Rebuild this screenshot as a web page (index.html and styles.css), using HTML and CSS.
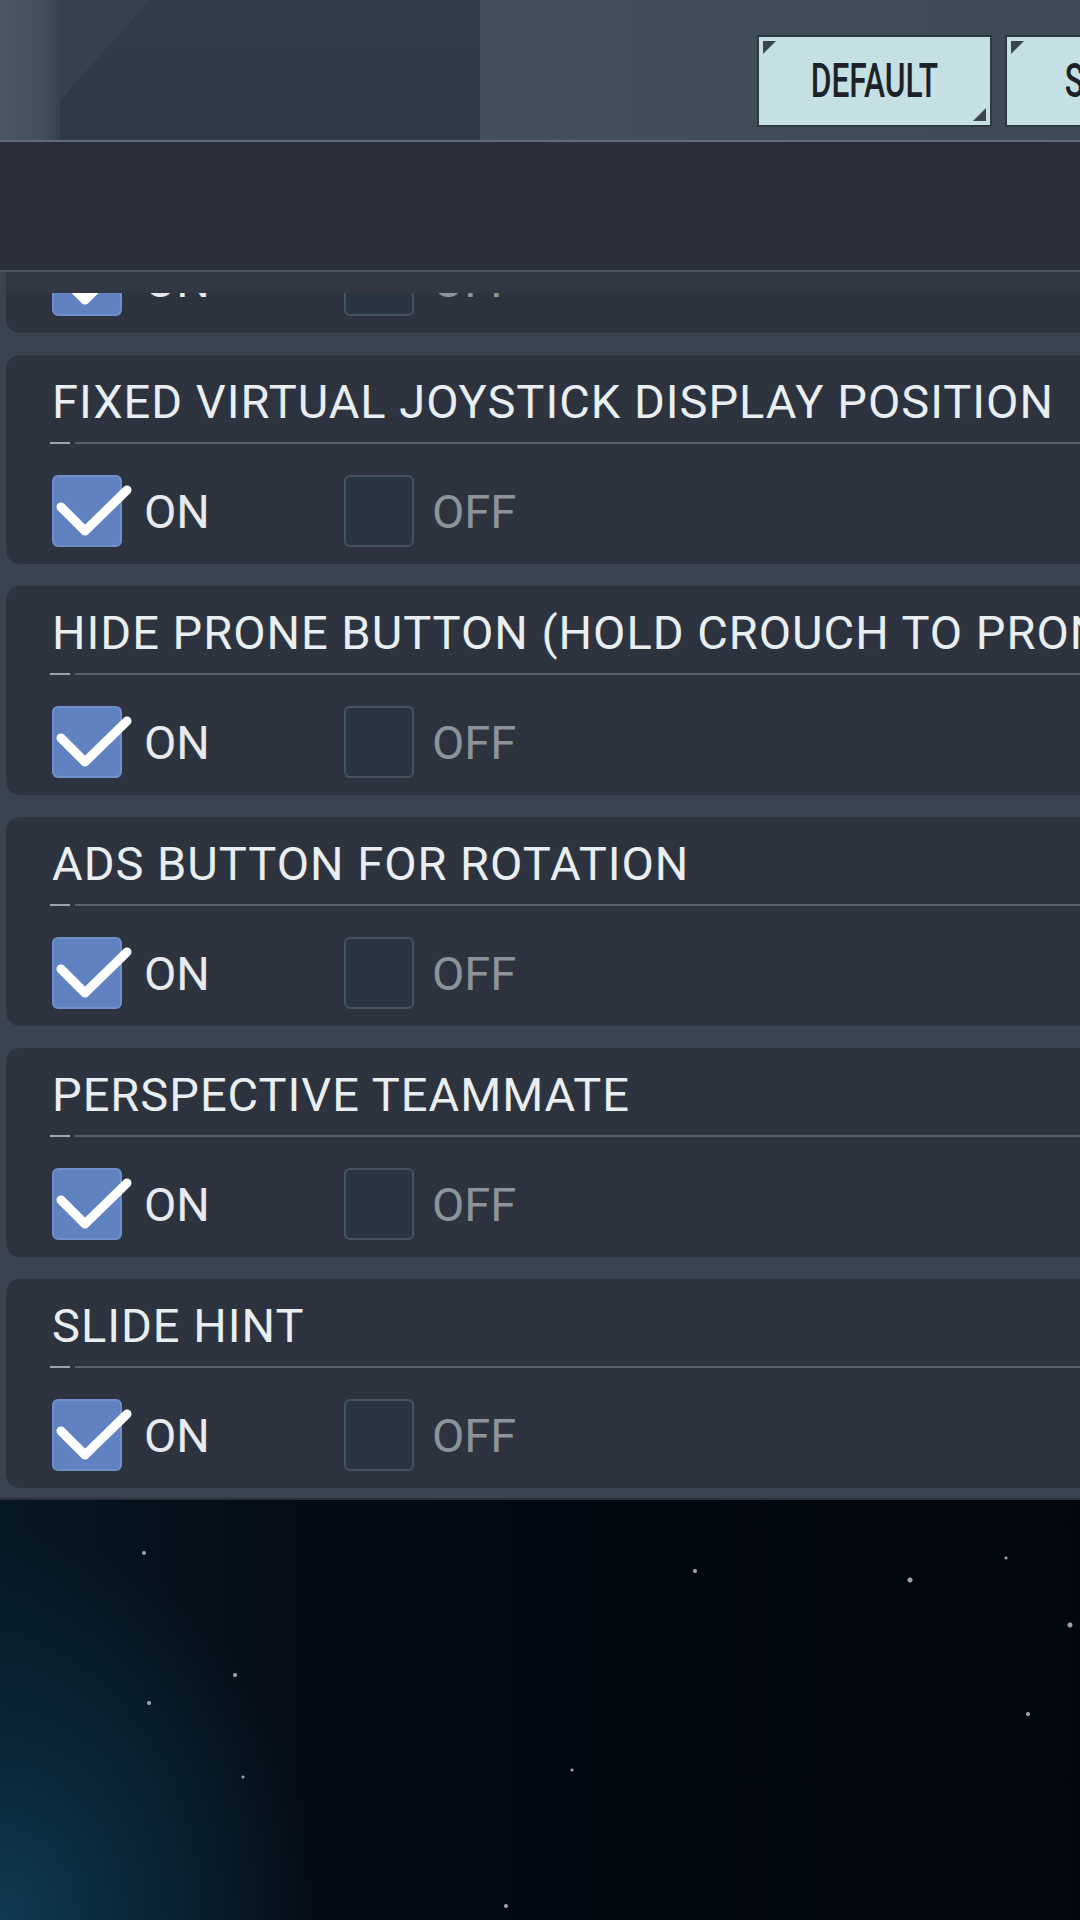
FILE: index.html
```html
<!DOCTYPE html>
<html lang="en">
<head>
    <meta charset="UTF-8">
    <meta name="viewport" content="width=device-width, initial-scale=1.0">
    <title>Controls Settings</title>
    <link rel="stylesheet" href="styles.css">
</head>
<body>
    <div class="screen">
        <div class="topbar">
            <button class="btn"><span>DEFAULT</span></button>
            <button class="btn"><span>SUBMIT</span></button>
        </div>
        <div class="band"></div>
        <div class="list-top"></div>

        <div class="list">
            <div class="list-inner">
                <div class="card">
                    <div class="title">&nbsp;</div>
                    <div class="rule"></div>
                    <div class="row">
                        <div class="option"><span class="box on"><svg viewBox="0 0 80 70"><polyline points="9,32 33,56 75,15"/></svg></span><span class="label">ON</span></div>
                        <div class="option"><span class="box"></span><span class="label off">OFF</span></div>
                    </div>
                </div>

                <div class="card">
                    <div class="title">FIXED VIRTUAL JOYSTICK DISPLAY POSITION</div>
                    <div class="rule"></div>
                    <div class="row">
                        <div class="option"><span class="box on"><svg viewBox="0 0 80 70"><polyline points="9,32 33,56 75,15"/></svg></span><span class="label">ON</span></div>
                        <div class="option"><span class="box"></span><span class="label off">OFF</span></div>
                    </div>
                </div>

                <div class="card">
                    <div class="title">HIDE PRONE BUTTON (HOLD CROUCH TO PRONE)</div>
                    <div class="rule"></div>
                    <div class="row">
                        <div class="option"><span class="box on"><svg viewBox="0 0 80 70"><polyline points="9,32 33,56 75,15"/></svg></span><span class="label">ON</span></div>
                        <div class="option"><span class="box"></span><span class="label off">OFF</span></div>
                    </div>
                </div>

                <div class="card">
                    <div class="title">ADS BUTTON FOR ROTATION</div>
                    <div class="rule"></div>
                    <div class="row">
                        <div class="option"><span class="box on"><svg viewBox="0 0 80 70"><polyline points="9,32 33,56 75,15"/></svg></span><span class="label">ON</span></div>
                        <div class="option"><span class="box"></span><span class="label off">OFF</span></div>
                    </div>
                </div>

                <div class="card">
                    <div class="title">PERSPECTIVE TEAMMATE</div>
                    <div class="rule"></div>
                    <div class="row">
                        <div class="option"><span class="box on"><svg viewBox="0 0 80 70"><polyline points="9,32 33,56 75,15"/></svg></span><span class="label">ON</span></div>
                        <div class="option"><span class="box"></span><span class="label off">OFF</span></div>
                    </div>
                </div>

                <div class="card">
                    <div class="title">SLIDE HINT</div>
                    <div class="rule"></div>
                    <div class="row">
                        <div class="option"><span class="box on"><svg viewBox="0 0 80 70"><polyline points="9,32 33,56 75,15"/></svg></span><span class="label">ON</span></div>
                        <div class="option"><span class="box"></span><span class="label off">OFF</span></div>
                    </div>
                </div>
            </div>
        </div>

        <div class="space"></div>
    </div>
</body>
</html>
```

FILE: styles.css
```css
body {
    margin: 0;
    background: #03070d;
    font-family: Roboto, "Noto Sans", sans-serif;
    color: #e9eef1;
}
.screen {
    width: 1080px;
    height: 1920px;
    overflow: hidden;
    display: flex;
    flex-direction: column;
}
.topbar {
    position: relative;
    flex: none;
    height: 142px;
    box-sizing: border-box;
    padding: 37px 0 0 759px;
    display: flex;
    gap: 17px;
    overflow: hidden;
    border-bottom: 2px solid #5f6b76;
    background: linear-gradient(to right, #4a5663 0, #44505e 40px, #37424f 60px, #35404d 470px, #424e5b 480px, #3f4a57 100%);
}
.topbar::before {
    content: "";
    position: absolute;
    left: 60px;
    top: 0;
    width: 420px;
    height: 142px;
    background: linear-gradient(to bottom, #323c49, #2f3946);
    clip-path: polygon(90px 0, 100% 0, 100% 100%, 0 100%, 0 100px);
}
.btn {
    position: relative;
    flex: none;
    width: 231px;
    height: 88px;
    border: none;
    outline: 2px solid #2e3944;
    background: #c5e0e3;
    color: #1c2228;
    padding: 0;
    font-family: Roboto, sans-serif;
    font-weight: 500;
    font-size: 48px;
    line-height: 88px;
    text-align: center;
    z-index: 1;
}
.btn span {
    display: inline-block;
    transform: scaleX(0.66);
}
.btn::before {
    content: "";
    position: absolute;
    left: 4px;
    top: 4px;
    width: 13px;
    height: 13px;
    background: #3a4550;
    clip-path: polygon(0 0, 100% 0, 0 100%);
}
.btn::after {
    content: "";
    position: absolute;
    right: 4px;
    bottom: 4px;
    width: 13px;
    height: 13px;
    background: #3a4550;
    clip-path: polygon(100% 0, 100% 100%, 0 100%);
}
.band {
    flex: none;
    height: 128px;
    background: #2a2f39;
    border-bottom: 2px solid #4b535e;
}
.list-top {
    flex: none;
    height: 21px;
    background: linear-gradient(to right, #3a4350 0 6px, #313843 6px);
}
.list {
    flex: none;
    height: 1205px;
    overflow: hidden;
    background: #3a4350;
}
.list-inner {
    margin-top: -169px;
    display: flex;
    flex-direction: column;
    gap: 22px;
    padding-left: 6px;
}
.card {
    height: 209px;
    box-sizing: border-box;
    background: #2d343f;
    border-radius: 14px 0 0 14px;
    padding: 24px 0 0 46px;
}
.title {
    font-size: 47px;
    line-height: 46px;
    letter-spacing: 1px;
    white-space: nowrap;
    color: #e9eef1;
}
.rule {
    margin-top: 17px;
    height: 2px;
    background: linear-gradient(to right, #9aa3ac 0 20px, transparent 20px 25px, #56606b 25px);
    margin-left: -2px;
}
.row {
    display: flex;
    margin-top: 31px;
}
.option {
    width: 292px;
    display: flex;
    align-items: center;
}
.box {
    position: relative;
    width: 66px;
    height: 68px;
    border: 2px solid #475260;
    border-radius: 6px;
    background: #2a3542;
}
.box.on {
    background: #6082c0;
    border-color: #7090cb;
}
.box svg {
    position: absolute;
    left: -2px;
    top: -2px;
    width: 80px;
    height: 70px;
    overflow: visible;
}
.box polyline {
    fill: none;
    stroke: #ffffff;
    stroke-width: 9;
    stroke-linecap: round;
    stroke-linejoin: round;
}
.label {
    margin-left: 22px;
    font-size: 47px;
    line-height: 47px;
    color: #e6eaee;
}
.label.off {
    margin-left: 18px;
    color: #8d939a;
}
.space {
    flex: 1;
    border-top: 2px solid #2a313b;
    background:
        radial-gradient(circle at 144px 53px, #8aa4b6 1.5px, transparent 2.5px),
        radial-gradient(circle at 695px 71px, #9aa5ae 1.5px, transparent 2.5px),
        radial-gradient(circle at 910px 80px, #9aa5ae 2px, transparent 3px),
        radial-gradient(circle at 1006px 58px, #9aa5ae 1px, transparent 2px),
        radial-gradient(circle at 1070px 125px, #9aa5ae 2px, transparent 3px),
        radial-gradient(circle at 235px 175px, #9aa5ae 1.5px, transparent 2.5px),
        radial-gradient(circle at 149px 203px, #9aa5ae 1.5px, transparent 2.5px),
        radial-gradient(circle at 1028px 214px, #9aa5ae 1.5px, transparent 2.5px),
        radial-gradient(circle at 243px 277px, #9aa5ae 1px, transparent 2px),
        radial-gradient(circle at 572px 270px, #9aa5ae 1px, transparent 2px),
        radial-gradient(circle at 506px 406px, #9aa5ae 1.5px, transparent 2.5px),
        radial-gradient(ellipse 420px 520px at 0 420px, #0f3a52 0, #0a2536 35%, transparent 75%),
        linear-gradient(to right, #061824 0, #040b14 30%, #03070e 100%);
}
```
